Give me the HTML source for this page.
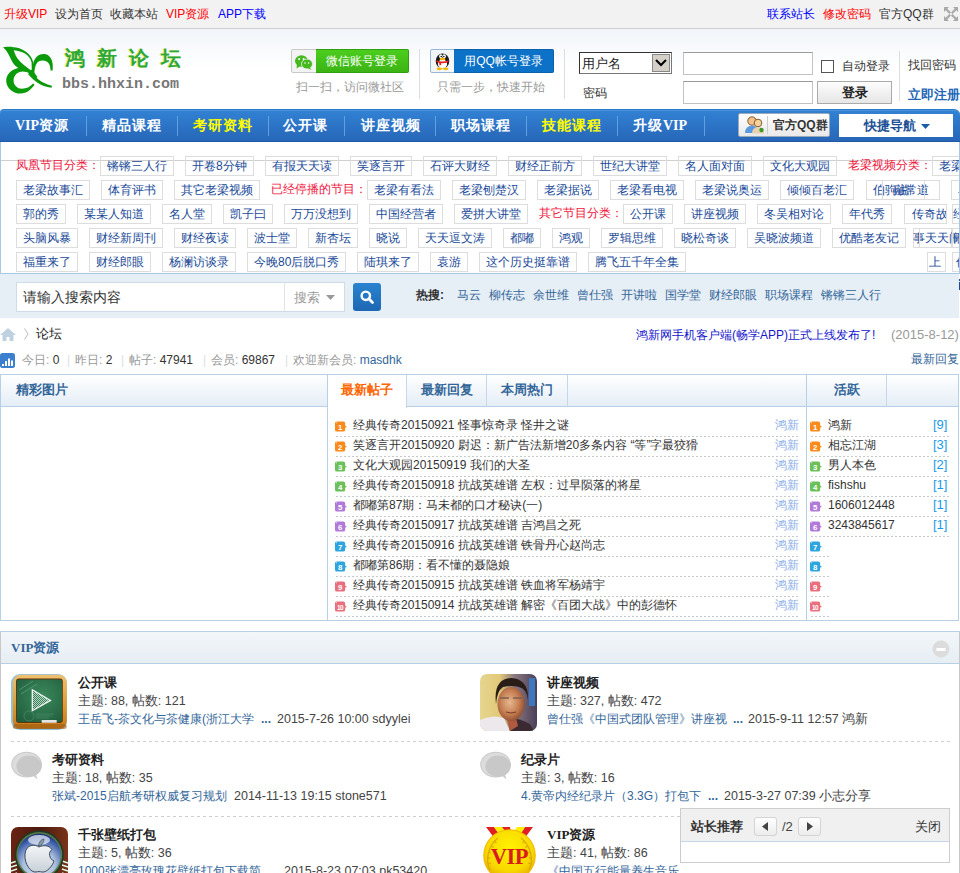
<!DOCTYPE html>
<html><head><meta charset="utf-8">
<style>
*{margin:0;padding:0;box-sizing:border-box}
html,body{width:960px;height:873px;overflow:hidden;background:#fff}
body{font-family:"Liberation Sans",sans-serif;font-size:12px;color:#333;position:relative}
.a{position:absolute;white-space:nowrap}
#top{position:absolute;left:0;top:0;width:960px;height:29px;background:#f2f2f2;border-bottom:1px solid #cfcfcf}
#hd{position:absolute;left:0;top:29px;width:960px;height:80px;background:linear-gradient(#f1f5f9 0,#fff 39px,#fff 80px)}
#nv{position:absolute;left:0;top:109px;width:960px;height:33px;background:linear-gradient(#3282d4,#2766b8);border-radius:4px 6px 0 0;border-top:1px solid #2a78cc;border-bottom:1px solid #1e58a0;box-shadow:inset 0 1px 0 #4a94dc}
.nvi{position:absolute;top:-1px;height:32px;line-height:32px;color:#fff;font-size:14px;font-weight:bold;letter-spacing:1px}
.sep{position:absolute;top:6px;width:1px;height:20px;background:#609fe0}
#tags{position:absolute;left:0;top:142px;width:960px;height:132px;border-left:1px solid #a9c8e8;border-right:1px solid #a9c8e8;border-bottom:1px solid #a9c8e8;background:#fff;overflow:hidden}
.t{position:absolute;height:20px;line-height:18px;border:1px solid #ddd;color:#1a4a98;font-size:12px;padding:0 6px;white-space:nowrap}
.tr{position:absolute;height:20px;line-height:18px;color:#f0143c;font-size:12px;white-space:nowrap}
.row{position:absolute;left:15px;top:0;height:20px;display:flex;white-space:nowrap}
.row .t{position:static;margin-right:11px;flex:none}
.row .tr{position:static;flex:none;margin-right:0}
#srch{position:absolute;left:0;top:274px;width:959px;height:44px;background:#e6eef6}

.nvbtn{position:absolute;top:4px;height:25px}
.hot{position:absolute;top:14px;color:#336699;font-size:12px;line-height:14px}
.ph{position:absolute;top:0;height:32px;background:linear-gradient(#fff,#e4edf6);border-bottom:1px solid #b8d0e6}
.tab{position:absolute;top:0;height:32px;line-height:30px;text-align:center;font-size:13px;font-weight:bold;color:#336699;border-right:1px solid #c4d8ea;background:linear-gradient(#fff,#e4edf6);border-bottom:1px solid #b8d0e6}
.li{position:absolute;left:0;height:20px;line-height:20px;font-size:12px;color:#333;white-space:nowrap}
.dash{position:absolute;height:1px;background:repeating-linear-gradient(90deg,#c6c9cc 0 2px,transparent 2px 4px)}
.dash3{position:absolute;height:1px;background:repeating-linear-gradient(90deg,#cfcfcf 0 3px,transparent 3px 6px)}
.ic{position:absolute;width:12px;height:11px}
.fi{position:absolute}
.sv{font-family:"Liberation Serif",serif;letter-spacing:0}
.ft{position:absolute;font-size:13px;font-weight:bold;color:#222;white-space:nowrap;line-height:16px}
.fs{position:absolute;font-size:12.5px;color:#444;white-space:nowrap;line-height:14px}
.fl{position:absolute;font-size:12px;color:#336699;white-space:nowrap;line-height:14px}
.fl b{font-weight:bold;color:#336699}
.fl i{font-style:normal;color:#333}
</style></head><body>
<div id="top">
 <span class="a" style="left:4px;top:6px;color:#f00">升级VIP</span>
 <span class="a" style="left:55px;top:6px;color:#333">设为首页</span>
 <span class="a" style="left:110px;top:6px;color:#333">收藏本站</span>
 <span class="a" style="left:166px;top:6px;color:#f00">VIP资源</span>
 <span class="a" style="left:218px;top:6px;color:#00f">APP下载</span>
 <span class="a" style="left:767px;top:6px;color:#00f">联系站长</span>
 <span class="a" style="left:823px;top:6px;color:#f00">修改密码</span>
 <span class="a" style="left:879px;top:6px;color:#333">官方QQ群</span>
 <svg class="a" style="left:944px;top:7px" width="14" height="14" viewBox="0 0 14 14"><g fill="#a9a9a9"><path d="M0,0 L5,0 L3.3,1.7 L7,5.4 L5.4,7 L1.7,3.3 L0,5Z"/><path d="M14,0 L9,0 L10.7,1.7 L7,5.4 L8.6,7 L12.3,3.3 L14,5Z"/><path d="M0,14 L5,14 L3.3,12.3 L7,8.6 L5.4,7 L1.7,10.7 L0,9Z"/><path d="M14,14 L9,14 L10.7,12.3 L7,8.6 L8.6,7 L12.3,10.7 L14,9Z"/></g></svg>
</div>
<div id="hd">
 <svg class="a" style="left:0;top:11px" width="60" height="60" viewBox="0 0 60 60">
  <g fill="#0a9a0a">
   <path d="M3,7.2 C7,6.8 10,6.8 12.4,6.9 C14,10 15,15 17.5,18.5 C21,23.5 27,27.5 32,31.2 L31,33.2 C25,30.5 19,29.5 15,25.5 C11,21.5 9,12 3,7.2 Z"/>
   <path d="M12.4,6.9 C22,7.5 31,13 33.2,22 L33.4,31 L31.8,31 L31.6,22.5 C30,15 22,10.5 12.4,10.3 Z"/>
   <path d="M18,28 C10,30 6,35.5 6.2,41.2 C6.5,48 13,53.6 20.6,53.6 C27,53.6 31,49.5 34.6,44.8 L33,43.6 C30,47 26.5,48.8 22,48.8 C17,48.8 13.6,45 13.6,40.5 C13.6,35.5 17.5,31.6 22.7,31.6 C25,31.6 28,32.4 30,33.8 L31,31.6 C27,29 22,27.6 18,28 Z"/>
   <path d="M29,32 C36,36.5 40,43 51.9,45.8 L51.7,47.8 C40,46.5 33.5,40 28.3,34.5 Z"/><path d="M28.5,30.5 L33.2,29.5 L34.5,33 L37.5,37 L35,39 L29.5,34.5 Z"/>
   <path d="M34,37 C34.5,30 35,24 38.5,21.5 C42,19.5 47.5,20 49.5,24.7 C50.3,26.8 50.5,29 50.5,30.6 L52.6,30.6 C53.2,25.5 52.8,19.5 49,16 C46,13.5 41,13.3 37,16.5 C33.5,19.5 32.5,25 32.8,29 C33,33 33.5,35.5 36,38.5 Z"/>
  </g>
 </svg>
 <span class="a" style="left:65px;top:18px;font-size:20px;font-weight:bold;color:#2aa83a;letter-spacing:12px;text-shadow:-1px 0 #e8e860;line-height:22px">鸿新论坛</span>
 <span class="a" style="left:62px;top:48px;font-family:'Liberation Mono',monospace;font-size:15px;font-weight:bold;color:#777;line-height:16px">bbs.hhxin.com</span>
 <!-- weixin -->
 <div class="a" style="left:291px;top:20px;width:118px;height:24px;border:1px solid #c9c9c9;border-radius:2px;background:#f3f3f3"></div>
 <div class="a" style="left:316px;top:20px;width:93px;height:24px;background:linear-gradient(#4ccd1e,#3bb414);border:1px solid #2fa00f;border-left:0;border-radius:0 2px 2px 0;color:#fff;font-size:12px;line-height:22px;text-align:center">微信账号登录</div>
 <svg class="a" style="left:294px;top:25px" width="20" height="16" viewBox="0 0 20 16"><g fill="#45b91e"><ellipse cx="7.5" cy="7" rx="6.5" ry="5.8"/><path d="M3,10.5 L2.5,14.5 L6.5,12 Z"/></g><g fill="#fff"><circle cx="5.2" cy="5" r="1"/><circle cx="9.6" cy="5" r="1"/></g><ellipse cx="13" cy="10" rx="5.5" ry="5" fill="#45b91e" stroke="#f3f3f3" stroke-width="0.8"/><path d="M15.5,13.5 L17.5,16 L14,14.5Z" fill="#45b91e"/><g fill="#fff"><circle cx="11" cy="9" r=".8"/><circle cx="14.6" cy="9" r=".8"/></g></svg>
 <span class="a" style="left:296px;top:50px;color:#999;font-size:12px">扫一扫，访问微社区</span>
 <div class="a" style="left:419px;top:20px;width:1px;height:50px;background:#ddd"></div>
 <!-- qq -->
 <div class="a" style="left:430px;top:20px;width:124px;height:24px;border:1px solid #9ab7d3;border-radius:2px;background:#f2f6f9"></div>
 <div class="a" style="left:454px;top:20px;width:100px;height:24px;background:#0b72c7;border:1px solid #0a62ad;border-left:0;border-radius:0 2px 2px 0;color:#fff;font-size:12px;line-height:22px;text-align:center">用QQ帐号登录</div>
 <svg class="a" style="left:434px;top:22px" width="17" height="20" viewBox="0 0 17 20"><ellipse cx="8.5" cy="10" rx="6.8" ry="7.6" fill="#1a1a1a"/><ellipse cx="8.5" cy="13" rx="4.6" ry="4.6" fill="#fff"/><ellipse cx="6.8" cy="5.2" rx="1.7" ry="2" fill="#fff"/><ellipse cx="10.2" cy="5.2" rx="1.7" ry="2" fill="#fff"/><circle cx="7.2" cy="5.5" r=".8" fill="#111"/><circle cx="9.8" cy="5.5" r=".8" fill="#111"/><ellipse cx="8.5" cy="8" rx="3" ry="1.3" fill="#f5b800"/><path d="M2.5,9.2 Q8.5,12 14.5,9.2 L14.5,11 Q8.5,13.5 2.5,11Z" fill="#e62222"/><path d="M5,11 L5.5,14.5 L7.2,14 L7,11.5Z" fill="#e62222"/><ellipse cx="5.3" cy="17.8" rx="2.8" ry="1.4" fill="#f5b800"/><ellipse cx="11.7" cy="17.8" rx="2.8" ry="1.4" fill="#f5b800"/></svg>
 <span class="a" style="left:437px;top:50px;color:#999;font-size:12px">只需一步，快速开始</span>
 <div class="a" style="left:564px;top:20px;width:1px;height:50px;background:#ddd"></div>
 <!-- login -->
 <div class="a" style="left:579px;top:23px;width:93px;height:22px;border:1px solid #777;border-top-color:#333;border-left-color:#333;background:#fff;font-size:13px;line-height:22px;padding-left:2px;color:#222">用户名</div>
 <div class="a" style="left:652px;top:25px;width:18px;height:18px;background:#d4d0c8;border:1px solid #888"><svg width="16" height="16" viewBox="0 0 16 16" style="display:block"><path d="M3,5 L8,10 L13,5" stroke="#000" stroke-width="2" fill="none"/></svg></div>
 <div class="a" style="left:683px;top:23px;width:130px;height:23px;border:1px solid #c2c2c2;border-top-color:#9a9a9a;background:#fff"></div>
 <div class="a" style="left:821px;top:31px;width:13px;height:13px;border:1px solid #555;background:#fff"></div>
 <span class="a" style="left:842px;top:29px;font-size:12px;color:#333">自动登录</span>
 <div class="a" style="left:899px;top:22px;width:1px;height:50px;background:#ddd"></div>
 <span class="a" style="left:908px;top:28px;font-size:12px;color:#333">找回密码</span>
 <span class="a" style="left:583px;top:56px;font-size:12px;color:#333">密码</span>
 <div class="a" style="left:683px;top:52px;width:130px;height:23px;border:1px solid #c2c2c2;border-top-color:#9a9a9a;background:#fff"></div>
 <div class="a" style="left:817px;top:52px;width:75px;height:23px;border:1px solid #aaa;background:linear-gradient(#fdfdfd,#e6e6e6);font-size:13px;font-weight:bold;color:#222;text-align:center;line-height:21px">登录</div>
 <span class="a" style="left:908px;top:57px;font-size:13px;font-weight:bold;color:#2366b8">立即注册</span>
</div>
<div id="nv">
 <span class="nvi" style="left:15px"><span class="sv">VIP</span>资源</span>
 <div class="sep" style="left:86px"></div>
 <span class="nvi" style="left:102px">精品课程</span>
 <div class="sep" style="left:177px"></div>
 <span class="nvi" style="left:193px;color:#ff0">考研资料</span>
 <div class="sep" style="left:268px"></div>
 <span class="nvi" style="left:283px">公开课</span>
 <div class="sep" style="left:344px"></div>
 <span class="nvi" style="left:361px">讲座视频</span>
 <div class="sep" style="left:435px"></div>
 <span class="nvi" style="left:451px">职场课程</span>
 <div class="sep" style="left:526px"></div>
 <span class="nvi" style="left:542px;color:#ff0">技能课程</span>
 <div class="sep" style="left:617px"></div>
 <span class="nvi" style="left:633px">升级<span class="sv">VIP</span></span>
 <div class="sep" style="left:704px"></div>
 <div class="a" style="left:738px;top:3px;width:92px;height:24px;background:linear-gradient(#fff,#e9e9e9);border:1px solid #9ab;border-radius:2px"></div>
 <div class="a" style="left:767px;top:6px;width:1px;height:18px;background:#ccc"></div>
 <svg class="a" style="left:744px;top:5px" width="22" height="19" viewBox="0 0 22 19"><circle cx="8" cy="6" r="4.2" fill="#f2c48c" stroke="#8a5a2a" stroke-width="1"/><path d="M3.5,5 Q8,0 12.5,5 Q11,2.5 8,2.5 Q5,2.5 3.5,5Z" fill="#6b3d1a"/><path d="M1,18 Q1,11 8,10.5 Q15,11 15,18Z" fill="#5a9ae0"/><circle cx="14" cy="8" r="3.8" fill="#f6d2a0" stroke="#8a5a2a" stroke-width="1"/><path d="M8,18.5 Q8,12.5 14,12 Q20,12.5 20,18.5Z" fill="#e8d0b0"/><circle cx="17.5" cy="15" r="2.2" fill="#3a9a2a"/></svg>
 <span class="a" style="left:773px;top:-1px;line-height:32px;font-size:12px;font-weight:bold;color:#333">官方QQ群</span>
 <div class="a" style="left:839px;top:4px;width:114px;height:23px;background:#fff;color:#1b4f94;font-size:13px;font-weight:bold;line-height:23px;padding-left:25px">快捷导航</div>
 <svg class="a" style="left:921px;top:14px" width="9" height="5" viewBox="0 0 9 5"><path d="M0,0 L9,0 L4.5,5Z" fill="#1b5ca8"/></svg>
</div>
<div id="tags">
<div class="a" style="left:0;top:18px;width:960px;height:1px;background:#cfcfcf"></div>
<div class="row" style="top:14px">
<span class="tr">凤凰节目分类：</span><span class="t">锵锵三人行</span><span class="t">开卷8分钟</span><span class="t">有报天天读</span><span class="t">笑逐言开</span><span class="t">石评大财经</span><span class="t">财经正前方</span><span class="t">世纪大讲堂</span><span class="t">名人面对面</span><span class="t">文化大观园</span><span class="tr">老梁视频分类：</span><span class="t">老梁故事汇</span></div>
<div class="row" style="top:38px">
<span class="t">老梁故事汇</span><span class="t">体育评书</span><span class="t">其它老梁视频</span><span class="tr">已经停播的节目：</span><span class="t">老梁有看法</span><span class="t">老梁刨楚汉</span><span class="t">老梁据说</span><span class="t">老梁看电视</span><span class="t">老梁说奥运</span><span class="t">倾倾百老汇</span></div>
<div class="row" style="top:62px">
<span class="t">郭的秀</span><span class="t">某某人知道</span><span class="t">名人堂</span><span class="t">凯子曰</span><span class="t">万万没想到</span><span class="t">中国经营者</span><span class="t">爱拼大讲堂</span><span class="tr">其它节目分类：</span><span class="t">公开课</span><span class="t">讲座视频</span><span class="t">冬吴相对论</span><span class="t">年代秀</span></div>
<div class="row" style="top:86px">
<span class="t">头脑风暴</span><span class="t">财经新周刊</span><span class="t">财经夜读</span><span class="t">波士堂</span><span class="t">新杏坛</span><span class="t">晓说</span><span class="t">天天逗文涛</span><span class="t">都嘟</span><span class="t">鸿观</span><span class="t">罗辑思维</span><span class="t">晓松奇谈</span><span class="t">吴晓波频道</span><span class="t">优酷老友记</span></div>
<div class="row" style="top:110px">
<span class="t">福重来了</span><span class="t">财经郎眼</span><span class="t">杨澜访谈录</span><span class="t">今晚80后脱口秀</span><span class="t">陆琪来了</span><span class="t">袁游</span><span class="t">这个历史挺靠谱</span><span class="t">腾飞五千年全集</span></div>
<span class="t" style="left:865px;top:38px;width:74px;padding:0;overflow:hidden"><span style="position:absolute;left:6px">伯</span><span style="position:absolute;left:18px">驹说</span><span style="position:absolute;left:26px">融常</span><span style="position:absolute;left:50px">道</span></span>
<div class="a" style="left:881px;top:38px;width:1px;height:20px;background:#ddd"></div><div class="a" style="left:923px;top:38px;width:1px;height:20px;background:#ddd"></div>
<span class="t" style="left:950px;top:38px;width:30px">单</span>
<span class="t" style="left:903px;top:62px;width:43px;padding:0 0 0 7px;overflow:hidden">传奇故</span>
<span class="t" style="left:951px;top:62px;width:30px;padding:0">经</span>
<span class="t" style="left:912px;top:86px;width:39px;padding:0;overflow:visible"><span style="position:absolute;left:-1px">事天天闹</span></span>
<div class="a" style="left:918px;top:86px;width:1px;height:20px;background:#ddd"></div>
<span class="t" style="left:951px;top:86px;width:30px;padding:0">闹</span>
<span class="t" style="left:926px;top:110px;width:19px;padding:0 0 0 1px">上</span>
<span class="t" style="left:951px;top:110px;width:30px;padding:0 0 0 3px">传</span>
</div>
<div id="srch">
 <div class="a" style="left:16px;top:8px;width:329px;height:30px;background:#fff;border:1px solid #cfdce8"></div>
 <span class="a" style="left:23px;top:15px;font-size:14px;color:#333;line-height:16px">请输入搜索内容</span>
 <div class="a" style="left:284px;top:9px;width:1px;height:28px;background:#e3e3e3"></div>
 <span class="a" style="left:294px;top:16px;font-size:13px;color:#999;line-height:15px">搜索</span>
 <svg class="a" style="left:326px;top:21px" width="9" height="5" viewBox="0 0 9 5"><path d="M0,0 L9,0 L4.5,5Z" fill="#999"/></svg>
 <div class="a" style="left:353px;top:9px;width:28px;height:28px;background:linear-gradient(#2a84cf,#1d67b3);border-radius:3px"></div>
 <svg class="a" style="left:359px;top:15px" width="16" height="16" viewBox="0 0 16 16"><circle cx="6.8" cy="6.8" r="4.2" stroke="#fff" stroke-width="2.4" fill="none"/><path d="M9.8,9.8 L13.5,13.5" stroke="#fff" stroke-width="2.8" stroke-linecap="round"/></svg>
 <span class="a" style="left:416px;top:14px;font-size:12px;font-weight:bold;color:#333;line-height:14px">热搜:</span>
 <span class="hot" style="left:457px">马云</span>
 <span class="hot" style="left:489px">柳传志</span>
 <span class="hot" style="left:533px">余世维</span>
 <span class="hot" style="left:577px">曾仕强</span>
 <span class="hot" style="left:621px">开讲啦</span>
 <span class="hot" style="left:665px">国学堂</span>
 <span class="hot" style="left:709px">财经郎眼</span>
 <span class="hot" style="left:765px">职场课程</span>
 <span class="hot" style="left:821px">锵锵三人行</span>
</div>
<div class="a" style="left:959px;top:279px;width:1px;height:2px;background:#1a4a98"></div><div class="a" style="left:959px;top:282px;width:1px;height:8px;background:#1a4a98"></div>
<!-- breadcrumb -->
<svg class="a" style="left:0;top:328px" width="16" height="13" viewBox="0 0 16 13"><path d="M8,0 L16,7 L13.5,7 L13.5,13 L9.5,13 L9.5,9 L6.5,9 L6.5,13 L2.5,13 L2.5,7 L0,7Z" fill="#bdd1e0"/></svg>
<svg class="a" style="left:24px;top:328px" width="5" height="12" viewBox="0 0 5 12"><path d="M0.5,0.5 L4,6 L0.5,11.5" stroke="#bbb" stroke-width="1" fill="none"/></svg>
<span class="a" style="left:36px;top:327px;font-size:12.5px;color:#222;line-height:14px">论坛</span>
<a class="a" style="left:636px;top:328px;font-size:12px;color:#1616cc;text-decoration:none;line-height:15px">鸿新网手机客户端(畅学APP)正式上线发布了!</a>
<span class="a" style="left:891px;top:327px;font-size:13px;color:#999;line-height:15px">(2015-8-12)</span>
<svg class="a" style="left:0;top:353px" width="15" height="15" viewBox="0 0 15 15"><rect width="15" height="15" rx="2.5" fill="#3b7fce"/><g fill="#fff"><rect x="2" y="11" width="2" height="2"/><rect x="5" y="8" width="2" height="5"/><rect x="8" y="5.5" width="2" height="7.5"/><rect x="11" y="7.5" width="2" height="5.5"/></g></svg>
<div class="a" style="left:0;top:353px;font-size:12px;line-height:14px;color:#999">
 <span class="a" style="left:22px">今日: <span style="color:#333">0</span></span>
 <span class="a" style="left:67px;color:#ddd">|</span>
 <span class="a" style="left:75px">昨日: <span style="color:#333">2</span></span>
 <span class="a" style="left:121px;color:#ddd">|</span>
 <span class="a" style="left:129px">帖子: <span style="color:#333">47941</span></span>
 <span class="a" style="left:203px;color:#ddd">|</span>
 <span class="a" style="left:211px">会员: <span style="color:#333">69867</span></span>
 <span class="a" style="left:285px;color:#ddd">|</span>
 <span class="a" style="left:293px">欢迎新会员: <span style="color:#336699">masdhk</span></span>
</div>
<span class="a" style="left:911px;top:352px;font-size:12px;color:#336699;line-height:15px">最新回复</span>

<div id="portal" class="a" style="left:0;top:374px;width:959px;height:247px;border:1px solid #b8d0e6;background:#fff">
<div class="ph" style="left:0;width:326px"></div><span class="a" style="left:15px;top:-1px;line-height:32px;font-size:13px;font-weight:bold;color:#336699">精彩图片</span>
<div class="a" style="left:326px;top:0;width:1px;height:245px;background:#b8d0e6"></div>
<div class="ph" style="left:327px;width:478px"></div>
<div class="a" style="left:327px;top:0;width:79px;height:33px;background:#fff;border-right:1px solid #c4d8ea;line-height:30px;text-align:center;font-size:13px;font-weight:bold;color:#f60">最新帖子</div>
<div class="tab" style="left:406px;width:80px">最新回复</div>
<div class="tab" style="left:486px;width:81px">本周热门</div>
<div class="a" style="left:805px;top:0;width:1px;height:245px;background:#b8d0e6"></div>
<div class="ph" style="left:806px;width:151px"></div>
<div class="tab" style="left:806px;width:80px">活跃</div>
<svg class="ic" style="left:334px;top:46px" width="13" height="11" viewBox="0 0 13 11"><path d="M2,0 H9 Q11,0 11,2 V4.5 L13,6 L11,6.5 V9 Q11,11 9,11 H2 Q0,11 0,9 V2 Q0,0 2,0Z" fill="#fb8a1c"/><path d="M1.2,1.8 L2.2,1" stroke="#fff" stroke-width=".8"/><text x="5.6" y="9.2" text-anchor="middle" font-family="Liberation Sans" font-size="8.5" font-weight="bold" fill="#fff">1</text></svg>
<span class="li" style="left:352px;top:40px">经典传奇20150921 怪事惊奇录 怪井之谜</span>
<span class="li" style="left:774px;top:40px;color:#8cb0e8">鸿新</span>
<div class="dash" style="left:335px;top:61px;width:463px"></div>
<svg class="ic" style="left:334px;top:66px" width="13" height="11" viewBox="0 0 13 11"><path d="M2,0 H9 Q11,0 11,2 V4.5 L13,6 L11,6.5 V9 Q11,11 9,11 H2 Q0,11 0,9 V2 Q0,0 2,0Z" fill="#fb8a1c"/><path d="M1.2,1.8 L2.2,1" stroke="#fff" stroke-width=".8"/><text x="5.6" y="9.2" text-anchor="middle" font-family="Liberation Sans" font-size="8.5" font-weight="bold" fill="#fff">2</text></svg>
<span class="li" style="left:352px;top:60px">笑逐言开20150920 尉迟：新广告法新增20多条内容 “等”字最狡猾</span>
<span class="li" style="left:774px;top:60px;color:#8cb0e8">鸿新</span>
<div class="dash" style="left:335px;top:81px;width:463px"></div>
<svg class="ic" style="left:334px;top:86px" width="13" height="11" viewBox="0 0 13 11"><path d="M2,0 H9 Q11,0 11,2 V4.5 L13,6 L11,6.5 V9 Q11,11 9,11 H2 Q0,11 0,9 V2 Q0,0 2,0Z" fill="#6cc05a"/><path d="M1.2,1.8 L2.2,1" stroke="#fff" stroke-width=".8"/><text x="5.6" y="9.2" text-anchor="middle" font-family="Liberation Sans" font-size="8.5" font-weight="bold" fill="#fff">3</text></svg>
<span class="li" style="left:352px;top:80px">文化大观园20150919 我们的大圣</span>
<span class="li" style="left:774px;top:80px;color:#8cb0e8">鸿新</span>
<div class="dash" style="left:335px;top:101px;width:463px"></div>
<svg class="ic" style="left:334px;top:106px" width="13" height="11" viewBox="0 0 13 11"><path d="M2,0 H9 Q11,0 11,2 V4.5 L13,6 L11,6.5 V9 Q11,11 9,11 H2 Q0,11 0,9 V2 Q0,0 2,0Z" fill="#6cc05a"/><path d="M1.2,1.8 L2.2,1" stroke="#fff" stroke-width=".8"/><text x="5.6" y="9.2" text-anchor="middle" font-family="Liberation Sans" font-size="8.5" font-weight="bold" fill="#fff">4</text></svg>
<span class="li" style="left:352px;top:100px">经典传奇20150918 抗战英雄谱 左权：过早陨落的将星</span>
<span class="li" style="left:774px;top:100px;color:#8cb0e8">鸿新</span>
<div class="dash" style="left:335px;top:121px;width:463px"></div>
<svg class="ic" style="left:334px;top:126px" width="13" height="11" viewBox="0 0 13 11"><path d="M2,0 H9 Q11,0 11,2 V4.5 L13,6 L11,6.5 V9 Q11,11 9,11 H2 Q0,11 0,9 V2 Q0,0 2,0Z" fill="#b27ad8"/><path d="M1.2,1.8 L2.2,1" stroke="#fff" stroke-width=".8"/><text x="5.6" y="9.2" text-anchor="middle" font-family="Liberation Sans" font-size="8.5" font-weight="bold" fill="#fff">5</text></svg>
<span class="li" style="left:352px;top:120px">都嘟第87期：马未都的口才秘诀(一)</span>
<span class="li" style="left:774px;top:120px;color:#8cb0e8">鸿新</span>
<div class="dash" style="left:335px;top:141px;width:463px"></div>
<svg class="ic" style="left:334px;top:146px" width="13" height="11" viewBox="0 0 13 11"><path d="M2,0 H9 Q11,0 11,2 V4.5 L13,6 L11,6.5 V9 Q11,11 9,11 H2 Q0,11 0,9 V2 Q0,0 2,0Z" fill="#b27ad8"/><path d="M1.2,1.8 L2.2,1" stroke="#fff" stroke-width=".8"/><text x="5.6" y="9.2" text-anchor="middle" font-family="Liberation Sans" font-size="8.5" font-weight="bold" fill="#fff">6</text></svg>
<span class="li" style="left:352px;top:140px">经典传奇20150917 抗战英雄谱 吉鸿昌之死</span>
<span class="li" style="left:774px;top:140px;color:#8cb0e8">鸿新</span>
<div class="dash" style="left:335px;top:161px;width:463px"></div>
<svg class="ic" style="left:334px;top:166px" width="13" height="11" viewBox="0 0 13 11"><path d="M2,0 H9 Q11,0 11,2 V4.5 L13,6 L11,6.5 V9 Q11,11 9,11 H2 Q0,11 0,9 V2 Q0,0 2,0Z" fill="#2fa5e0"/><path d="M1.2,1.8 L2.2,1" stroke="#fff" stroke-width=".8"/><text x="5.6" y="9.2" text-anchor="middle" font-family="Liberation Sans" font-size="8.5" font-weight="bold" fill="#fff">7</text></svg>
<span class="li" style="left:352px;top:160px">经典传奇20150916 抗战英雄谱 铁骨丹心赵尚志</span>
<span class="li" style="left:774px;top:160px;color:#8cb0e8">鸿新</span>
<div class="dash" style="left:335px;top:181px;width:463px"></div>
<svg class="ic" style="left:334px;top:186px" width="13" height="11" viewBox="0 0 13 11"><path d="M2,0 H9 Q11,0 11,2 V4.5 L13,6 L11,6.5 V9 Q11,11 9,11 H2 Q0,11 0,9 V2 Q0,0 2,0Z" fill="#2fa5e0"/><path d="M1.2,1.8 L2.2,1" stroke="#fff" stroke-width=".8"/><text x="5.6" y="9.2" text-anchor="middle" font-family="Liberation Sans" font-size="8.5" font-weight="bold" fill="#fff">8</text></svg>
<span class="li" style="left:352px;top:180px">都嘟第86期：看不懂的聂隐娘</span>
<span class="li" style="left:774px;top:180px;color:#8cb0e8">鸿新</span>
<div class="dash" style="left:335px;top:201px;width:463px"></div>
<svg class="ic" style="left:334px;top:206px" width="13" height="11" viewBox="0 0 13 11"><path d="M2,0 H9 Q11,0 11,2 V4.5 L13,6 L11,6.5 V9 Q11,11 9,11 H2 Q0,11 0,9 V2 Q0,0 2,0Z" fill="#e8707e"/><path d="M1.2,1.8 L2.2,1" stroke="#fff" stroke-width=".8"/><text x="5.6" y="9.2" text-anchor="middle" font-family="Liberation Sans" font-size="8.5" font-weight="bold" fill="#fff">9</text></svg>
<span class="li" style="left:352px;top:200px">经典传奇20150915 抗战英雄谱 铁血将军杨靖宇</span>
<span class="li" style="left:774px;top:200px;color:#8cb0e8">鸿新</span>
<div class="dash" style="left:335px;top:221px;width:463px"></div>
<svg class="ic" style="left:334px;top:226px" width="13" height="11" viewBox="0 0 13 11"><path d="M2,0 H9 Q11,0 11,2 V4.5 L13,6 L11,6.5 V9 Q11,11 9,11 H2 Q0,11 0,9 V2 Q0,0 2,0Z" fill="#e8707e"/><path d="M1.2,1.8 L2.2,1" stroke="#fff" stroke-width=".8"/><text x="5.5" y="8.8" text-anchor="middle" font-family="Liberation Sans" font-size="7" font-weight="bold" fill="#fff" letter-spacing="-.5">10</text></svg>
<span class="li" style="left:352px;top:220px">经典传奇20150914 抗战英雄谱 解密《百团大战》中的彭德怀</span>
<span class="li" style="left:774px;top:220px;color:#8cb0e8">鸿新</span>
<div class="dash" style="left:335px;top:241px;width:463px"></div>
<svg class="ic" style="left:809px;top:46px" width="13" height="11" viewBox="0 0 13 11"><path d="M2,0 H9 Q11,0 11,2 V4.5 L13,6 L11,6.5 V9 Q11,11 9,11 H2 Q0,11 0,9 V2 Q0,0 2,0Z" fill="#fb8a1c"/><path d="M1.2,1.8 L2.2,1" stroke="#fff" stroke-width=".8"/><text x="5.6" y="9.2" text-anchor="middle" font-family="Liberation Sans" font-size="8.5" font-weight="bold" fill="#fff">1</text></svg>
<span class="li" style="left:827px;top:40px">鸿新</span>
<span class="li" style="left:932px;top:40px;color:#1a9ae6;font-size:13px">[9]</span>
<div class="dash" style="left:810px;top:61px;width:138px"></div>
<svg class="ic" style="left:809px;top:66px" width="13" height="11" viewBox="0 0 13 11"><path d="M2,0 H9 Q11,0 11,2 V4.5 L13,6 L11,6.5 V9 Q11,11 9,11 H2 Q0,11 0,9 V2 Q0,0 2,0Z" fill="#fb8a1c"/><path d="M1.2,1.8 L2.2,1" stroke="#fff" stroke-width=".8"/><text x="5.6" y="9.2" text-anchor="middle" font-family="Liberation Sans" font-size="8.5" font-weight="bold" fill="#fff">2</text></svg>
<span class="li" style="left:827px;top:60px">相忘江湖</span>
<span class="li" style="left:932px;top:60px;color:#1a9ae6;font-size:13px">[3]</span>
<div class="dash" style="left:810px;top:81px;width:138px"></div>
<svg class="ic" style="left:809px;top:86px" width="13" height="11" viewBox="0 0 13 11"><path d="M2,0 H9 Q11,0 11,2 V4.5 L13,6 L11,6.5 V9 Q11,11 9,11 H2 Q0,11 0,9 V2 Q0,0 2,0Z" fill="#6cc05a"/><path d="M1.2,1.8 L2.2,1" stroke="#fff" stroke-width=".8"/><text x="5.6" y="9.2" text-anchor="middle" font-family="Liberation Sans" font-size="8.5" font-weight="bold" fill="#fff">3</text></svg>
<span class="li" style="left:827px;top:80px">男人本色</span>
<span class="li" style="left:932px;top:80px;color:#1a9ae6;font-size:13px">[2]</span>
<div class="dash" style="left:810px;top:101px;width:138px"></div>
<svg class="ic" style="left:809px;top:106px" width="13" height="11" viewBox="0 0 13 11"><path d="M2,0 H9 Q11,0 11,2 V4.5 L13,6 L11,6.5 V9 Q11,11 9,11 H2 Q0,11 0,9 V2 Q0,0 2,0Z" fill="#6cc05a"/><path d="M1.2,1.8 L2.2,1" stroke="#fff" stroke-width=".8"/><text x="5.6" y="9.2" text-anchor="middle" font-family="Liberation Sans" font-size="8.5" font-weight="bold" fill="#fff">4</text></svg>
<span class="li" style="left:827px;top:100px">fishshu</span>
<span class="li" style="left:932px;top:100px;color:#1a9ae6;font-size:13px">[1]</span>
<div class="dash" style="left:810px;top:121px;width:138px"></div>
<svg class="ic" style="left:809px;top:126px" width="13" height="11" viewBox="0 0 13 11"><path d="M2,0 H9 Q11,0 11,2 V4.5 L13,6 L11,6.5 V9 Q11,11 9,11 H2 Q0,11 0,9 V2 Q0,0 2,0Z" fill="#b27ad8"/><path d="M1.2,1.8 L2.2,1" stroke="#fff" stroke-width=".8"/><text x="5.6" y="9.2" text-anchor="middle" font-family="Liberation Sans" font-size="8.5" font-weight="bold" fill="#fff">5</text></svg>
<span class="li" style="left:827px;top:120px">1606012448</span>
<span class="li" style="left:932px;top:120px;color:#1a9ae6;font-size:13px">[1]</span>
<div class="dash" style="left:810px;top:141px;width:138px"></div>
<svg class="ic" style="left:809px;top:146px" width="13" height="11" viewBox="0 0 13 11"><path d="M2,0 H9 Q11,0 11,2 V4.5 L13,6 L11,6.5 V9 Q11,11 9,11 H2 Q0,11 0,9 V2 Q0,0 2,0Z" fill="#b27ad8"/><path d="M1.2,1.8 L2.2,1" stroke="#fff" stroke-width=".8"/><text x="5.6" y="9.2" text-anchor="middle" font-family="Liberation Sans" font-size="8.5" font-weight="bold" fill="#fff">6</text></svg>
<span class="li" style="left:827px;top:140px">3243845617</span>
<span class="li" style="left:932px;top:140px;color:#1a9ae6;font-size:13px">[1]</span>
<div class="dash" style="left:810px;top:161px;width:138px"></div>
<svg class="ic" style="left:809px;top:166px" width="13" height="11" viewBox="0 0 13 11"><path d="M2,0 H9 Q11,0 11,2 V4.5 L13,6 L11,6.5 V9 Q11,11 9,11 H2 Q0,11 0,9 V2 Q0,0 2,0Z" fill="#2fa5e0"/><path d="M1.2,1.8 L2.2,1" stroke="#fff" stroke-width=".8"/><text x="5.6" y="9.2" text-anchor="middle" font-family="Liberation Sans" font-size="8.5" font-weight="bold" fill="#fff">7</text></svg>
<div class="dash" style="left:810px;top:181px;width:18px"></div>
<svg class="ic" style="left:809px;top:186px" width="13" height="11" viewBox="0 0 13 11"><path d="M2,0 H9 Q11,0 11,2 V4.5 L13,6 L11,6.5 V9 Q11,11 9,11 H2 Q0,11 0,9 V2 Q0,0 2,0Z" fill="#2fa5e0"/><path d="M1.2,1.8 L2.2,1" stroke="#fff" stroke-width=".8"/><text x="5.6" y="9.2" text-anchor="middle" font-family="Liberation Sans" font-size="8.5" font-weight="bold" fill="#fff">8</text></svg>
<div class="dash" style="left:810px;top:201px;width:18px"></div>
<svg class="ic" style="left:809px;top:206px" width="13" height="11" viewBox="0 0 13 11"><path d="M2,0 H9 Q11,0 11,2 V4.5 L13,6 L11,6.5 V9 Q11,11 9,11 H2 Q0,11 0,9 V2 Q0,0 2,0Z" fill="#e8707e"/><path d="M1.2,1.8 L2.2,1" stroke="#fff" stroke-width=".8"/><text x="5.6" y="9.2" text-anchor="middle" font-family="Liberation Sans" font-size="8.5" font-weight="bold" fill="#fff">9</text></svg>
<div class="dash" style="left:810px;top:221px;width:18px"></div>
<svg class="ic" style="left:809px;top:226px" width="13" height="11" viewBox="0 0 13 11"><path d="M2,0 H9 Q11,0 11,2 V4.5 L13,6 L11,6.5 V9 Q11,11 9,11 H2 Q0,11 0,9 V2 Q0,0 2,0Z" fill="#e8707e"/><path d="M1.2,1.8 L2.2,1" stroke="#fff" stroke-width=".8"/><text x="5.5" y="8.8" text-anchor="middle" font-family="Liberation Sans" font-size="7" font-weight="bold" fill="#fff" letter-spacing="-.5">10</text></svg>
<div class="dash" style="left:810px;top:241px;width:18px"></div>
</div>
<div id="vip" class="a" style="left:0;top:631px;width:960px;height:260px;border:1px solid #b8d0e6;border-right-color:#c8c8c8;border-left-color:#c8c8c8;background:#fff">
<div class="a" style="left:0;top:0;width:958px;height:32px;background:linear-gradient(#f3f6f9,#e6eef4);border-bottom:1px solid #b8d0e6"></div>
<span class="a" style="left:10px;top:0;line-height:32px;font-size:13px;font-weight:bold;color:#336699"><span class="sv">VIP</span>资源</span>
<svg class="a" style="left:931px;top:8px" width="18" height="18" viewBox="0 0 18 18"><circle cx="9" cy="9" r="8.5" fill="#dcdcdc"/><rect x="4.5" y="8" width="9" height="3" fill="#fff"/></svg>
<svg class="fi" style="left:10px;top:42px" width="57" height="57" viewBox="0 0 57 57"><defs><linearGradient id="wd" x1="0" y1="0" x2="0" y2="1"><stop offset="0" stop-color="#f0c070"/><stop offset=".5" stop-color="#e0a038"/><stop offset="1" stop-color="#c87818"/></linearGradient><radialGradient id="gb" cx=".55" cy=".4" r=".75"><stop offset="0" stop-color="#3c8a5c"/><stop offset="1" stop-color="#1f5c3c"/></radialGradient><pattern id="ht" width="2" height="2" patternUnits="userSpaceOnUse"><rect width="1" height="1" fill="#e8f0ec"/><rect x="1" y="1" width="1" height="1" fill="#e8f0ec"/></pattern></defs><rect x="0" y="0" width="56" height="56" rx="9" fill="#8cc4e4"/><rect x="1.8" y="0.8" width="54" height="54" rx="8" fill="url(#wd)"/><rect x="1.8" y="50" width="54" height="5" rx="3" fill="#9a5a10" opacity=".6"/><rect x="5" y="4.6" width="46.8" height="44.4" rx="3" fill="#5a3510"/><rect x="5.8" y="5.5" width="45.2" height="42.6" rx="2" fill="url(#gb)"/><path d="M21.3,15.8 L39.5,26.4 L21.3,36.7Z" fill="url(#ht)" opacity=".75"/><path d="M21.3,15.8 L39.5,26.4 L21.3,36.7Z" fill="none" stroke="#f2f6f4" stroke-width="1.3"/><path d="M8,16 L22,7 M10,20 L26,10" stroke="#6aa888" stroke-width=".6"/><circle cx="18" cy="42" r="5" fill="none" stroke="#5a9a78" stroke-width=".5"/><path d="M25,40 H43 M25,42 H41 M25,44 H38" stroke="#5a9a78" stroke-width=".5"/><rect x="30.7" y="46" width="15" height="2.8" fill="#e4e4e4"/></svg>
<span class="ft" style="left:77px;top:43px">公开课</span>
<span class="fs" style="left:77px;top:62px">主题: 88, 帖数: 121</span>
<span class="fl" style="left:77px;top:80px">王岳飞-茶文化与茶健康(浙江大学</span>
<span class="fl" style="left:260px;top:80px;font-weight:bold">...</span>
<span class="fl" style="left:276px;top:80px;color:#444;font-size:12.5px">2015-7-26 10:00 sdyylei</span>
<svg class="fi" style="left:479px;top:42px" width="57" height="57" viewBox="0 0 57 57"><defs><clipPath id="fc"><rect width="57" height="57" rx="7"/></clipPath><linearGradient id="fbg" x1="0" y1="0" x2="1" y2="0"><stop offset="0" stop-color="#e6d690"/><stop offset=".35" stop-color="#e2c878"/><stop offset=".6" stop-color="#8a7a80"/><stop offset="1" stop-color="#4a3e58"/></linearGradient><radialGradient id="skin" cx=".45" cy=".45" r=".6"><stop offset="0" stop-color="#e8b890"/><stop offset=".6" stop-color="#c47c50"/><stop offset="1" stop-color="#8a4a30"/></radialGradient><filter id="bl"><feGaussianBlur stdDeviation=".7"/></filter></defs><g clip-path="url(#fc)"><rect width="57" height="57" fill="url(#fbg)"/><g filter="url(#bl)"><rect x="49" y="4" width="6" height="28" fill="#3a78c0"/><path d="M0,57 L0,46 Q12,40 24,44 L30,57Z" fill="#ece8ec"/><path d="M28,44 Q40,44 50,50 L54,57 L30,57Z" fill="#3a2a30"/><path d="M26,42 Q32,46 36,44 L38,52 L30,57 Z" fill="#b05a40"/><ellipse cx="31" cy="30" rx="13.5" ry="17" fill="url(#skin)"/><path d="M16,30 Q13,5 31,4 Q49,5 48,26 Q47,15 39,13 Q31,11 23,13 Q17,17 16,30Z" fill="#2a1c18"/><path d="M20,24 H29 M33,24 H42" stroke="#7a6050" stroke-width="1.4"/><path d="M26,38 Q31,40 36,38" stroke="#7a3a2a" stroke-width="1" fill="none"/></g></g></svg>
<span class="ft" style="left:546px;top:43px">讲座视频</span>
<span class="fs" style="left:546px;top:62px">主题: 327, 帖数: 472</span>
<span class="fl" style="left:546px;top:80px">曾仕强《中国式团队管理》讲座视</span>
<span class="fl" style="left:732px;top:80px;font-weight:bold">...</span>
<span class="fl" style="left:747px;top:80px;color:#444;font-size:12.5px">2015-9-11 12:57 鸿新</span>
<div class="dash3" style="left:10px;top:109px;width:940px"></div>
<svg class="fi" style="left:10px;top:119px" width="32" height="31" viewBox="0 0 32 31"><ellipse cx="15.6" cy="13.6" rx="15.4" ry="12.9" fill="#cacaca"/><path d="M20,23 L26.5,28.5 L24.5,22Z" fill="#cacaca"/><ellipse cx="15.6" cy="13.6" rx="14.4" ry="11.9" fill="#dcdcdc"/><ellipse cx="18" cy="15.2" rx="12.6" ry="10.6" fill="#c8c8c8"/></svg>
<span class="ft" style="left:51px;top:120px">考研资料</span>
<span class="fs" style="left:51px;top:139px">主题: 18, 帖数: 35</span>
<span class="fl" style="left:51px;top:157px">张斌-2015启航考研权威复习规划</span>
<span class="fl" style="left:233px;top:157px;color:#444;font-size:12.5px">2014-11-13 19:15 stone571</span>
<svg class="fi" style="left:479px;top:119px" width="32" height="31" viewBox="0 0 32 31"><ellipse cx="15.6" cy="13.6" rx="15.4" ry="12.9" fill="#cacaca"/><path d="M20,23 L26.5,28.5 L24.5,22Z" fill="#cacaca"/><ellipse cx="15.6" cy="13.6" rx="14.4" ry="11.9" fill="#dcdcdc"/><ellipse cx="18" cy="15.2" rx="12.6" ry="10.6" fill="#c8c8c8"/></svg>
<span class="ft" style="left:520px;top:120px">纪录片</span>
<span class="fs" style="left:520px;top:139px">主题: 3, 帖数: 16</span>
<span class="fl" style="left:520px;top:157px">4.黄帝内经纪录片（3.3G）打包下</span>
<span class="fl" style="left:707px;top:157px;font-weight:bold">...</span>
<span class="fl" style="left:723px;top:157px;color:#444;font-size:12.5px">2015-3-27 07:39 小志分享</span>
<div class="dash3" style="left:10px;top:184px;width:940px"></div>
<svg class="fi" style="left:10px;top:195px" width="57" height="57" viewBox="0 0 57 57"><defs><clipPath id="ac"><rect width="57" height="57" rx="7"/></clipPath><linearGradient id="abr" x1="0" y1="0" x2="1" y2="0"><stop offset="0" stop-color="#6a2412"/><stop offset=".5" stop-color="#4a1a10"/><stop offset="1" stop-color="#7a3418"/></linearGradient><radialGradient id="ag" cx=".5" cy=".75" r=".75"><stop offset="0" stop-color="#e8eef8"/><stop offset=".5" stop-color="#a8bedc"/><stop offset=".85" stop-color="#3858a8"/><stop offset="1" stop-color="#1c2e68"/></radialGradient><linearGradient id="ap" x1="0" y1="0" x2="0" y2="1"><stop offset="0" stop-color="#f4f6f8"/><stop offset="1" stop-color="#c8d0d8"/></linearGradient></defs><g clip-path="url(#ac)"><rect width="57" height="57" fill="url(#abr)"/><g stroke="#dfe" stroke-width="1.4"><path d="M0,36 L6,34 M0,40 L6,38 M0,44 L6,42 M0,48 L6,46 M51,34 L57,36 M51,38 L57,40 M51,42 L57,44 M51,46 L57,48"/></g><circle cx="28.3" cy="28" r="24.5" fill="#1e3a22"/><circle cx="28.3" cy="28" r="23" fill="#5a7a4a"/><circle cx="28.3" cy="28" r="21.5" fill="url(#ag)"/><ellipse cx="28" cy="13" rx="11" ry="5" fill="#eef2fa" opacity=".7"/><path d="M28,20 C24,17 15,17 14,27 C13,37 20,46 25,45 C27,44.5 29,44.5 31,45 C36,46 42,38 43,34 C38,32 37,25 41,22.5 C38,18 32,18 28,20Z" fill="url(#ap)" stroke="#3a4a5a" stroke-width="1"/><path d="M27.5,19 C27.5,15 30,12.5 33,12 C33,15.5 31,18.5 27.5,19Z" fill="#8a9aa8" stroke="#3a4a5a" stroke-width=".6"/></g></svg>
<span class="ft" style="left:77px;top:195px">千张壁纸打包</span>
<span class="fs" style="left:77px;top:214px">主题: 5, 帖数: 36</span>
<span class="fl" style="left:77px;top:232px">1000张漂亮玫瑰花壁纸打包下载简</span>
<span class="fl" style="left:264px;top:232px;font-weight:bold">...</span>
<span class="fl" style="left:283px;top:232px;color:#444;font-size:12.5px">2015-8-23 07:03 pk53420</span>
<svg class="fi" style="left:479px;top:194px" width="60" height="57" viewBox="0 0 60 57"><defs><radialGradient id="gd" cx=".5" cy=".35" r=".65"><stop offset="0" stop-color="#fff200"/><stop offset=".7" stop-color="#f8d800"/><stop offset="1" stop-color="#e8b000"/></radialGradient></defs><path d="M6,1 L14,1 L22,12 L15,13Z" fill="#e02020"/><path d="M14,1 L22,1 L28,9 L22,12Z" fill="#fff000"/><path d="M22,1 L30,1 L31,6 L28,9Z" fill="#e02020"/><path d="M53,1 L45,1 L38,12 L44,13Z" fill="#e02020"/><path d="M45,1 L37,1 L32,8 L38,12Z" fill="#fff000"/><circle cx="29.5" cy="29.5" r="26.3" fill="#f0b800"/><circle cx="29.5" cy="29.5" r="25.3" fill="url(#gd)"/><g stroke="#d8a000" stroke-width="1.3" fill="none" opacity=".8"><path d="M10,44 C5,34 8,20 18,12"/><path d="M49,44 C54,34 51,20 41,12"/><path d="M8,38 l3,-1 M7,32 l3,0 M8,26 l3,1 M11,20 l3,1.5 M14,15 l2.5,2 M51,38 l-3,-1 M52,32 l-3,0 M51,26 l-3,1 M48,20 l-3,1.5 M45,15 l-2.5,2"/></g><text x="29.3" y="37.5" text-anchor="middle" font-family="Liberation Serif" font-weight="bold" font-size="22.5" fill="#d81c1c" letter-spacing="-.5">VIP</text></svg>
<span class="ft" style="left:546px;top:195px"><span class="sv">VIP</span>资源</span>
<span class="fs" style="left:546px;top:214px">主题: 41, 帖数: 86</span>
<span class="fl" style="left:546px;top:232px">《中国五行能量养生音乐</span>
<span class="fl" style="left:899px;top:232px;color:#444"></span>
</div>
<div class="a" style="left:680px;top:808px;width:270px;height:55px;border:1px solid #cdcdcd;background:#fff">
 <div class="a" style="left:0;top:0;width:268px;height:33px;background:#f0f0f0;border-bottom:1px solid #c6d6e6"></div>
 <span class="a" style="left:10px;top:10px;font-size:13px;font-weight:bold;color:#333;line-height:15px">站长推荐</span>
 <div class="a" style="left:73px;top:8px;width:23px;height:19px;border:1px solid #d4d4d4;border-radius:3px;background:linear-gradient(#fff,#ececec)"></div>
 <svg class="a" style="left:81px;top:13px" width="6" height="9" viewBox="0 0 6 9"><path d="M6,0 L0,4.5 L6,9Z" fill="#444"/></svg>
 <span class="a" style="left:101px;top:10px;font-size:13px;color:#444;line-height:15px">/2</span>
 <div class="a" style="left:117px;top:8px;width:23px;height:19px;border:1px solid #d4d4d4;border-radius:3px;background:linear-gradient(#fff,#ececec)"></div>
 <svg class="a" style="left:126px;top:13px" width="6" height="9" viewBox="0 0 6 9"><path d="M0,0 L6,4.5 L0,9Z" fill="#444"/></svg>
 <span class="a" style="left:234px;top:10px;font-size:13px;color:#333;line-height:15px">关闭</span>
</div>
</body></html>
